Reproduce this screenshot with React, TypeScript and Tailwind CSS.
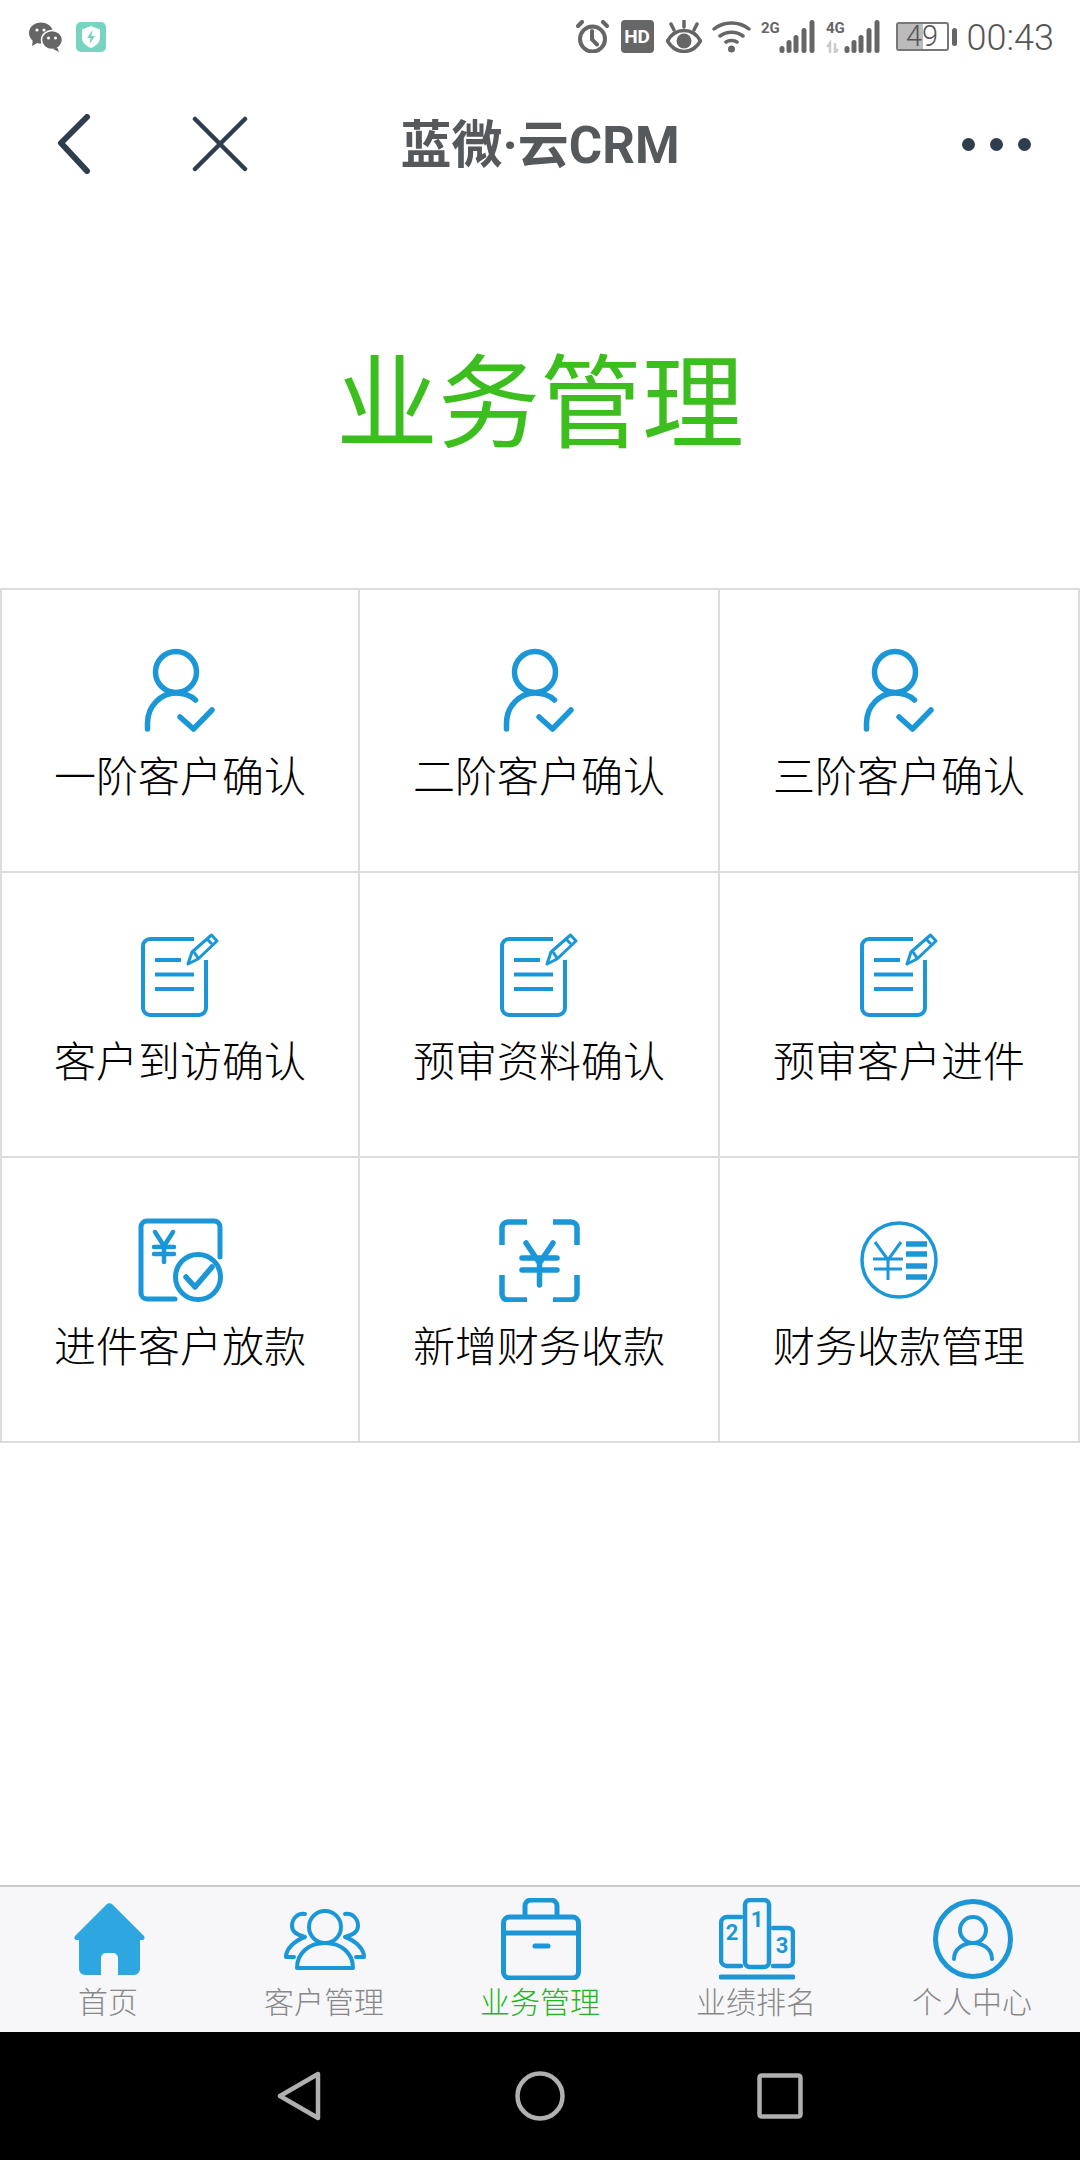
const cjk = "font-['Roboto','Noto_Sans_CJK_SC',sans-serif]";

function PersonCheck() {
  return (
    <svg width="72" height="84" viewBox="0 0 72 84" fill="none" stroke="#1b97d7" strokeWidth="5.5" strokeLinecap="round" strokeLinejoin="round">
      <circle cx="32" cy="24" r="20.5" />
      <path d="M3.5 81v-6C3.5 58 17 45 32 45c7 0 14 2 19.500 7" />
      <path d="M36 69l13.500 12L68 62" />
    </svg>
  );
}

function NoteEdit() {
  return (
    <svg width="78" height="84" viewBox="0 0 78 84" fill="none" stroke="#1b97d7" strokeWidth="4">
      <path d="M53 6H9a7 7 0 0 0-7 7v62a7 7 0 0 0 7 7h49a7 7 0 0 0 7-7V27" />
      <path d="M14 27h26M14 41.500h39M14 56h39" />
      <path d="M47 31l4-12L70.500 2 76 8 57 26z" strokeWidth="3" strokeLinejoin="round" />
      <path d="M53 19l4 6M66 6l5 5" strokeWidth="3" />
    </svg>
  );
}

function YenCheck() {
  return (
    <svg width="85" height="84" viewBox="0 0 85 84" fill="none" stroke="#1b97d7" strokeWidth="5" strokeLinecap="round" strokeLinejoin="round">
      <path d="M82 39V9a6 6 0 0 0-6-6H9a6 6 0 0 0-6 6v66a6 6 0 0 0 6 6h28" />
      <circle cx="60" cy="59" r="22.500" />
      <path d="M48 59l9 10 17-20" strokeWidth="5.500" />
      <path d="M17 14l9 14 9-14M16 29h20M16 36h20M26 28v16" strokeWidth="4.500" />
    </svg>
  );
}

function ScanYen() {
  return (
    <svg width="81" height="84" viewBox="0 0 81 84" fill="none" stroke="#1b97d7" strokeWidth="5.500">
      <path d="M28 4H9a6 6 0 0 0-6 6v17M54 4h18a6 6 0 0 1 6 6v17M3 57v19a6 6 0 0 0 6 6h19M78 57v19a6 6 0 0 1-6 6H54" />
      <path d="M27 25l13.500 20L54 25M23 40h35M23 52h35M40.500 42v25" strokeLinecap="round" />
    </svg>
  );
}

function LedgerYen() {
  return (
    <svg width="78" height="84" viewBox="0 0 78 84" fill="none" stroke="#1b97d7" strokeWidth="3.500">
      <circle cx="39" cy="42" r="37" />
      <path d="M15 24l13 18 13-18M13 41h30M14 51h28M28 41v21" strokeWidth="3" />
      <path d="M46 26h21M46 36h21M46 48h21M46 59h21" strokeWidth="5.500" />
    </svg>
  );
}

function HomeIcon() {
  return (
    <svg width="71" height="72" viewBox="0 0 71 72">
      <path
        fill="#2ea7e0"
        d="M32.500 1.500a4 4 0 0 1 6 0l31 31c2 2 1 4.500-2 4.500H66v29a6 6 0 0 1-6 6H44V55a5 5 0 0 0-5-5h-7a5 5 0 0 0-5 5v17H11a6 6 0 0 1-6-6V37H3.500c-3 0-4-2.500-2-4.500z"
      />
    </svg>
  );
}

function UsersIcon() {
  return (
    <svg width="82" height="62" viewBox="0 0 82 62" fill="none" stroke="#1b97d7" strokeWidth="4" strokeLinecap="round" strokeLinejoin="round">
      <circle cx="41" cy="19" r="16" />
      <path d="M13 60c0-15 12-25 28-25s28 10 28 25z" />
      <path d="M21 6C14 5 8 10 8 18c0 5 5 9 13 11C10 33 2 41 2 49h8" />
      <path d="M61 6c7-1 13 4 13 12 0 5-5 9-13 11 11 4 19 12 19 20h-8" />
    </svg>
  );
}

function CaseIcon() {
  return (
    <svg width="80" height="82" viewBox="0 0 80 82" fill="none" stroke="#1b97d7" strokeWidth="5" strokeLinecap="round">
      <path d="M24 18V8a6 6 0 0 1 6-6h20a6 6 0 0 1 6 6v10" />
      <rect x="2.500" y="19" width="75" height="61" rx="6" />
      <path d="M3 35h74M34 48h13" />
    </svg>
  );
}

function RankIcon() {
  return (
    <svg width="76" height="82" viewBox="0 0 76 82" fill="none" stroke="#1b97d7" strokeWidth="4.500" strokeLinecap="round">
      <rect x="26" y="2" width="24" height="67" rx="5" />
      <path d="M22 19H8a6 6 0 0 0-6 6v37a6 6 0 0 0 6 6h14" />
      <path d="M54 30h15a5 5 0 0 1 5 5v28a5 5 0 0 1-5 5H54" />
      <path d="M2 79h72" strokeWidth="5" />
      <text x="38" y="29" textAnchor="middle" fill="#1b97d7" stroke="none" fontSize="22" fontWeight="700" fontFamily="Roboto, sans-serif">1</text>
      <text x="13" y="42" textAnchor="middle" fill="#1b97d7" stroke="none" fontSize="22" fontWeight="700" fontFamily="Roboto, sans-serif">2</text>
      <text x="63" y="55" textAnchor="middle" fill="#1b97d7" stroke="none" fontSize="22" fontWeight="700" fontFamily="Roboto, sans-serif">3</text>
    </svg>
  );
}

function ProfileIcon() {
  return (
    <svg width="80" height="82" viewBox="0 0 80 82" fill="none" stroke="#1b97d7" strokeWidth="4" strokeLinecap="round">
      <circle cx="40" cy="41" r="37.500" strokeWidth="5" />
      <circle cx="40" cy="32" r="13" />
      <path d="M21 61c0-10 9-16 19-16s19 6 19 16" />
    </svg>
  );
}

function Signal({ label, extra }: { label: string; extra?: boolean }) {
  return (
    <svg className="-mt-[4px]" width="54" height="37" viewBox="0 -4 54 37">
      <text x="0" y="13" fontSize="15" fontWeight="700" fill="#666" fontFamily="Roboto, sans-serif">{label}</text>
      <rect x="18.500" y="26" width="5" height="7" rx="2.500" fill="#666" />
      <rect x="25.500" y="20" width="5" height="13" rx="2.500" fill="#666" />
      <rect x="32.500" y="15" width="5" height="18" rx="2.500" fill="#666" />
      <rect x="40.500" y="8" width="5" height="25" rx="2.500" fill="#666" />
      <rect x="48.500" y="0" width="5" height="33" rx="2.500" fill="#666" />
      {extra && <path d="M4 33V23l-3 4M9 23v10l3-4" stroke="#ccc" strokeWidth="2.500" fill="none" />}
    </svg>
  );
}

const items = [
  { label: "一阶客户确认", icon: <PersonCheck /> },
  { label: "二阶客户确认", icon: <PersonCheck /> },
  { label: "三阶客户确认", icon: <PersonCheck /> },
  { label: "客户到访确认", icon: <NoteEdit /> },
  { label: "预审资料确认", icon: <NoteEdit /> },
  { label: "预审客户进件", icon: <NoteEdit /> },
  { label: "进件客户放款", icon: <YenCheck /> },
  { label: "新增财务收款", icon: <ScanYen /> },
  { label: "财务收款管理", icon: <LedgerYen /> },
];

const tabs = [
  { label: "首页", icon: <HomeIcon /> },
  { label: "客户管理", icon: <UsersIcon /> },
  { label: "业务管理", icon: <CaseIcon />, active: true },
  { label: "业绩排名", icon: <RankIcon /> },
  { label: "个人中心", icon: <ProfileIcon /> },
];

export default function App() {
  return (
    <div className={`flex h-[2160px] w-[1080px] flex-col bg-white ${cjk}`}>
      {/* status bar */}
      <div className="flex h-[70px] shrink-0 items-start justify-between pt-[20px] pl-[29px] pr-[26px]">
        <div className="flex items-center gap-[13px] pt-[2px]">
          <svg width="34" height="30" viewBox="0 0 34 30" fill="#666">
            <ellipse cx="12" cy="11" rx="12" ry="10.500" />
            <path d="M4 17l-1 7 7-4z" />
            <ellipse cx="23" cy="18" rx="10.500" ry="9.500" stroke="#fff" strokeWidth="1.500" />
            <path d="M28 25l2 5-6-3z" />
            <circle cx="8" cy="8" r="1.600" fill="#fff" />
            <circle cx="15" cy="8" r="1.600" fill="#fff" />
            <circle cx="19.500" cy="16" r="1.500" fill="#fff" />
            <circle cx="26.500" cy="16" r="1.500" fill="#fff" />
          </svg>
          <svg width="30" height="30" viewBox="0 0 30 30">
            <rect width="30" height="30" rx="5" fill="#76d4c0" />
            <path d="M15 4l9 3.500v8c0 5-4 8.500-9 10.500-5-2-9-5.500-9-10.500v-8z" fill="#fff" />
            <path d="M16.500 8L11 16h3.500l-1 6 5.500-8h-3.500z" fill="#76d4c0" />
          </svg>
        </div>
        <div className="flex items-start">
          <svg width="33" height="33" viewBox="0 0 33 33" fill="none" stroke="#666" strokeWidth="4" strokeLinecap="round">
            <circle cx="16.500" cy="19" r="12.500" />
            <path d="M16 11v8.500l5 5M2 6l4-4M31 6l-4-4" />
          </svg>
          <div className="ml-[12px] flex h-[33px] w-[33px] items-center justify-center rounded-[4px] bg-[#666] text-[19px] font-bold leading-none text-white">HD</div>
          <svg className="ml-[12px]" width="36" height="33" viewBox="0 0 36 33" fill="none" stroke="#666" strokeWidth="3.500" strokeLinecap="round">
            <path d="M1.500 21C6 13 12 10.500 18 10.500S30 13 34.500 21C30 28.500 24 31.500 18 31.500S6 28.500 1.500 21z" />
            <circle cx="18" cy="21" r="7.500" fill="#666" stroke="none" />
            <path d="M18 1v6M5 4l3 6M31 4l-3 6" />
          </svg>
          <svg className="ml-[10px]" width="39" height="33" viewBox="0 0 39 33" fill="none" stroke="#666" strokeWidth="3.500" strokeLinecap="round">
            <path d="M2 9c10-8 25-8 35 0M8 16c7-5 16-5 23 0M14 22c3-2 8-2 11 0" />
            <circle cx="19.500" cy="29" r="3.500" fill="#666" stroke="none" />
          </svg>
          <div className="ml-[10px]"><Signal label="2G" /></div>
          <div className="ml-[11px]"><Signal label="4G" extra /></div>
          <div className="ml-[16px] flex items-center pt-[2px]">
            <div className="relative h-[29px] w-[53px] rounded-[3px] border-2 border-[#777]">
              <div className="h-full w-[25px] bg-[#bbb]" />
              <span className="absolute inset-0 flex items-center justify-center text-[29px] font-light leading-none text-[#555]">49</span>
            </div>
            <div className="ml-[3px] h-[18px] w-[5px] rounded-full bg-[#666]" />
          </div>
          <span className="ml-[10px] whitespace-nowrap text-[36px] font-light leading-[36px] text-[#555]">00:43</span>
        </div>
      </div>

      {/* title bar */}
      <div className="flex h-[140px] shrink-0 items-center pt-[8px]">
        <div className="flex w-[270px] items-center pl-[56px]">
          <svg width="36" height="60" viewBox="0 0 36 60" fill="none" stroke="#2f3e4e" strokeWidth="6" strokeLinecap="round" strokeLinejoin="round">
            <path d="M31 3L5 29l26 28" />
          </svg>
          <svg className="ml-[100px]" width="56" height="56" viewBox="0 0 56 56" fill="none" stroke="#2f3e4e" strokeWidth="4.500" strokeLinecap="round">
            <path d="M3 3l50 50M53 3L3 53" />
          </svg>
        </div>
        <div className="flex-1 pt-[2px] text-center text-[51px] font-bold leading-none text-[#55595c]">蓝微·云CRM</div>
        <div className="flex w-[270px] items-center justify-end gap-[15px] pr-[49px]">
          <div className="h-[13px] w-[13px] rounded-full bg-[#2f3e4e]" />
          <div className="h-[13px] w-[13px] rounded-full bg-[#2f3e4e]" />
          <div className="h-[13px] w-[13px] rounded-full bg-[#2f3e4e]" />
        </div>
      </div>

      {/* page heading */}
      <div className="flex h-[378px] shrink-0 items-center justify-center pt-[12px] text-[102px] font-normal leading-none text-[#3cbf1e]">业务管理</div>

      {/* function grid */}
      <div className="grid shrink-0 grid-cols-[358px_360px_360px] grid-rows-[283px_285px_285px] border-t-2 border-l-2 border-[#ddd]">
        {items.map((item, i) => (
          <div key={item.label} className={`flex flex-col items-center border-r-2 border-b-2 border-[#ddd] ${i < 3 ? "pt-[58px]" : "pt-[60px]"}`}>
            <div className="flex h-[84px] items-center justify-center">{item.icon}</div>
            <div className="mt-[15px] text-[42px] font-light leading-[62px] text-black">{item.label}</div>
          </div>
        ))}
      </div>

      <div className="flex-1" />

      {/* tab bar */}
      <div className="flex h-[147px] shrink-0 border-t-2 border-[#c9c9ce] bg-[#f7f7fa] pt-[11px]">
        {tabs.map((tab) => (
          <div key={tab.label} className="flex flex-1 flex-col items-center">
            <div className="ml-[2px] flex h-[82px] items-center justify-center">{tab.icon}</div>
            <div className={`mt-[7px] text-[30px] font-light leading-[32px] ${tab.active ? "text-[#1db81d]" : "text-[#888]"}`}>{tab.label}</div>
          </div>
        ))}
      </div>

      {/* android nav */}
      <div className="relative flex h-[128px] shrink-0 items-center bg-black">
        <div className="flex w-full items-center justify-center">
          <svg width="44" height="50" viewBox="0 0 44 50" fill="none" stroke="#b0b0b0" strokeWidth="4.500" strokeLinejoin="round">
            <path d="M41 3v44L3 25z" />
          </svg>
          <svg className="ml-[194px]" width="50" height="50" viewBox="0 0 50 50" fill="none" stroke="#b0b0b0" strokeWidth="4.500">
            <circle cx="25" cy="25" r="22.500" />
          </svg>
          <svg className="ml-[192px]" width="46" height="46" viewBox="0 0 46 46" fill="none" stroke="#b0b0b0" strokeWidth="4.500" strokeLinejoin="round">
            <rect x="2.500" y="2.500" width="41" height="41" rx="2" />
          </svg>
        </div>
      </div>
    </div>
  );
}
